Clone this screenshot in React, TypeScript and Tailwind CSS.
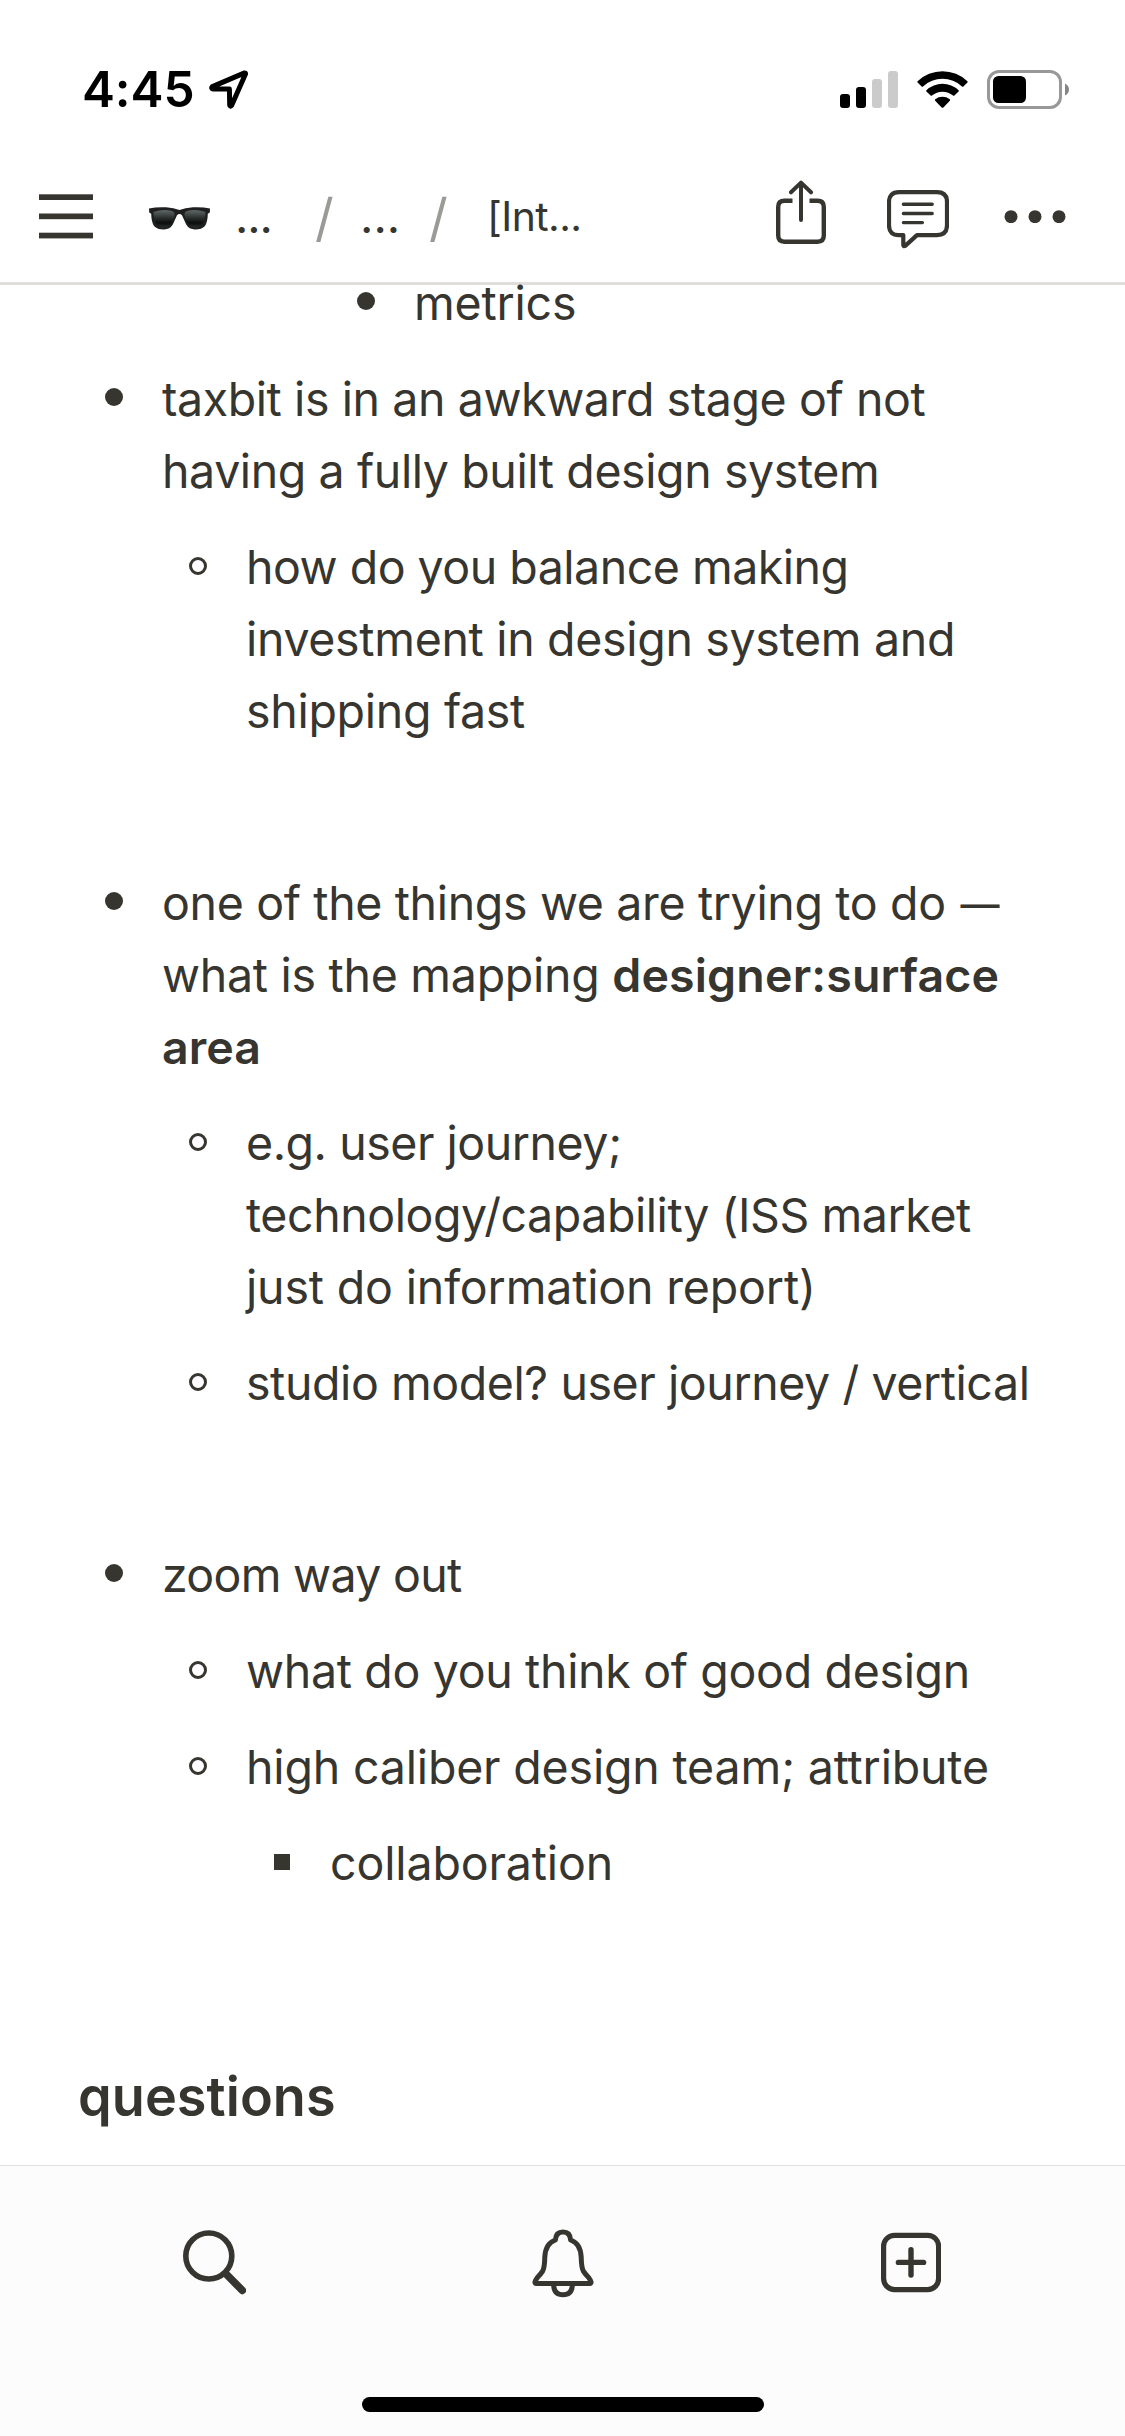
import type { ReactNode } from "react";

type Marker = "disc" | "circle" | "square";

function Bullet({ kind }: { kind: Marker }) {
  return (
    <span className="flex h-[70px] w-[24px] shrink-0 items-center justify-center">
      {kind === "disc" && <span className="mb-[2px] size-[18px] rounded-full bg-[#37352f]" />}
      {kind === "circle" && <span className="size-[18px] rounded-full border-[3px] border-[#37352f]" />}
      {kind === "square" && <span className="size-[16px] bg-[#37352f]" />}
    </span>
  );
}

function Item({ kind, indent, className = "", children }: { kind: Marker; indent: string; className?: string; children: ReactNode }) {
  return (
    <li className={`flex gap-9 ${indent} ${className}`}>
      <Bullet kind={kind} />
      <div className="flex flex-col">{children}</div>
    </li>
  );
}

function Line({ track, children }: { track: string; children: ReactNode }) {
  return <span className={`block h-[72px] whitespace-nowrap ${track}`}>{children}</span>;
}

function StatusBar() {
  return (
    <div className="flex h-[150px] items-center pt-[28px] pr-[56px] pl-[82px]">
      <span className="w-[127px] text-[49.5px] leading-[60px] font-semibold tracking-[-0.1px] text-black">4:45</span>
      <svg className="h-[39px] w-[39px]" viewBox="0 0 39 39" fill="none" stroke="#000" strokeWidth="5" strokeLinejoin="round">
        <path d="M35.6 2.9 L3.4 16.6 Q1.8 18.2 3.8 18.9 L20.4 19 L20.7 35.2 Q21.3 37 22.6 35.4 L36.6 3.8 Q36.6 2.8 35.6 2.9 Z" />
      </svg>
      <div className="ml-auto flex items-center">
        <svg className="h-[37px] w-[58px]" viewBox="0 0 58 37">
          <rect x="0" y="23" width="10" height="14" rx="3" fill="#000" />
          <rect x="16" y="16" width="10" height="21" rx="3" fill="#000" />
          <rect x="32" y="8" width="10" height="29" rx="3" fill="#cbcbcb" />
          <rect x="48" y="0" width="10" height="37" rx="3" fill="#cbcbcb" />
        </svg>
        <svg className="ml-[19px] h-[37px] w-[51px]" viewBox="0 0 51 37">
          <path d="M0.6 10.2 A36 36 0 0 1 50.4 10.2 Q51 11 50.4 11.6 L46.4 15.4 Q45.8 16 45 15.4 A29 29 0 0 0 6 15.4 Q5.2 16 4.6 15.4 L0.6 11.6 Q0 11 0.6 10.2Z" />
          <path d="M9.4 19.2 A23.5 23.5 0 0 1 41.6 19.2 Q42.2 20 41.6 20.6 L37.4 24.6 Q36.7 25 36 24.6 A16 16 0 0 0 15 24.6 Q14.3 25 13.6 24.6 L9.4 20.6 Q8.8 20 9.4 19.2Z" />
          <path d="M18.2 28.2 A12 12 0 0 1 32.8 28.2 Q33.4 29 32.8 29.8 L26.4 36.4 Q25.5 37.2 24.6 36.4 L18.2 29.8 Q17.6 29 18.2 28.2Z" />
        </svg>
        <svg className="ml-[19px] h-[39px] w-[82px]" viewBox="0 0 82 39">
          <rect x="1.5" y="1.5" width="72" height="36" rx="10.5" fill="none" stroke="#989898" strokeWidth="3" />
          <rect x="6" y="6" width="33" height="27" rx="5.5" fill="#000" />
          <path d="M78 13.5 Q82 15.5 82 19.5 Q82 23.5 78 25.5Z" fill="#858585" />
        </svg>
      </div>
    </div>
  );
}

function Sunglasses() {
  return (
    <svg className="mt-[5px] ml-[56px] h-[23px] w-[61px]" viewBox="0 0 61 23">
      <defs>
        <linearGradient id="lens" x1="0" y1="0" x2="0" y2="1">
          <stop offset="0" stopColor="#5f6867" />
          <stop offset="0.5" stopColor="#232827" />
          <stop offset="0.72" stopColor="#0b0d0c" />
          <stop offset="1" stopColor="#2b302f" />
        </linearGradient>
      </defs>
      <path d="M0 1.4 Q8 -0.2 17 0.3 Q25 0.8 30.5 3 Q36 0.8 44 0.3 Q53 -0.2 61 1.4 L60.8 5.6 L58.8 6.8 Q58.6 15 56 19 Q52.5 22.6 46 22.5 Q40 22.3 37.2 17.5 L33 8.2 Q30.5 6 28 8.2 L23.8 17.5 Q21 22.3 15 22.5 Q8.5 22.6 5 19 Q2.4 15 2.2 6.8 L0.2 5.6Z" fill="#1f1f1f" />
      <path d="M4.4 5 Q12 2.4 21 3.4 Q26.6 4.4 25.4 8.4 Q23 20.6 14.6 20.8 Q5.4 20.6 4.4 5Z" fill="url(#lens)" />
      <path d="M56.6 5 Q49 2.4 40 3.4 Q34.4 4.4 35.6 8.4 Q38 20.6 46.4 20.8 Q55.6 20.6 56.6 5Z" fill="url(#lens)" />
    </svg>
  );
}

function TopNav() {
  return (
    <nav className="flex h-[132px] items-center pl-[39px]">
      <svg className="h-[45px] w-[54px]" viewBox="0 0 54 45" fill="#37352f">
        <rect y="0.3" width="54" height="5.7" />
        <rect y="19.5" width="54" height="5.7" />
        <rect y="38.7" width="54" height="5.7" />
      </svg>
      <Sunglasses />
      <span className="ml-[25px] w-[80px] text-[46.5px] leading-[60px] tracking-[-1.2px]">...</span>
      <span className="w-[45px] pt-1 text-[52px] leading-[60px] text-[#9b9a97]">/</span>
      <span className="w-[69px] text-[46.5px] leading-[60px]">...</span>
      <span className="w-[58px] pt-1 text-[52px] leading-[60px] text-[#9b9a97]">/</span>
      <span className="w-[289px] text-[40.8px] leading-[60px] tracking-[-0.58px]">[Int...</span>
      <svg className="h-[72px] w-[50px]" viewBox="0 0 50 72" fill="none" stroke="#37352f" strokeWidth="4.4" strokeLinecap="round" strokeLinejoin="round">
        <path d="M16.5 20.8 H8.5 Q2.2 20.8 2.2 27 V55.5 Q2.2 61.7 8.5 61.7 H41.5 Q47.8 61.7 47.8 55.5 V27 Q47.8 20.8 41.5 20.8 H33.5" strokeLinecap="butt" />
        <path d="M25 40 V3 M15 12.3 L25 2.6 L35 12.3" strokeWidth="4" />
      </svg>
      <svg className="ml-[61px] h-[72px] w-[62px]" viewBox="0 0 62 72" fill="none" stroke="#37352f" strokeWidth="4.2" strokeLinecap="round" strokeLinejoin="round">
        <path d="M12 12.2 H50 Q60 12.2 60 22 V45.3 Q60 55.1 50 55.1 H30 L18.2 65.9 Q16.3 66.6 16.3 65 V55.1 H12 Q2 55.1 2 45.3 V22 Q2 12.2 12 12.2Z" />
        <path d="M16.4 24.2 H45.2 M16.4 33.5 H45.2 M16.4 42.6 H35.4" strokeWidth="3.4" />
      </svg>
      <svg className="ml-[55px] h-[14px] w-[62px]" viewBox="0 0 62 14" fill="#37352f">
        <circle cx="7" cy="7.7" r="6.5" />
        <circle cx="31" cy="7.7" r="6.5" />
        <circle cx="55" cy="7.7" r="6.5" />
      </svg>
    </nav>
  );
}

function BottomBar() {
  return (
    <footer className="flex h-[271px] shrink-0 flex-col items-center border-t border-[#e0e0e0] bg-[#fcfcfc]">
      <div className="flex h-[193px] w-full items-center pt-px pl-[183px]">
        <svg className="h-[72px] w-[63px]" viewBox="0 0 63 72" fill="none" stroke="#37352f" strokeLinecap="round">
          <circle cx="25.8" cy="29" r="23" strokeWidth="5.6" />
          <path d="M43.5 47.4 L59.3 63.4" strokeWidth="7.6" />
        </svg>
        <svg className="ml-[286px] h-[72px] w-[62px]" viewBox="0 0 62 72" fill="none" stroke="#37352f" strokeWidth="5" strokeLinejoin="round">
          <path d="M23.4 13 Q23.8 5 31 5 Q38.2 5 38.6 13 Q48.5 16.4 49.2 30 Q49.4 41 51.5 44.4 Q53 46.8 56.6 50.4 Q61 56.4 57.6 56.6 H4.4 Q1 56.4 5.4 50.4 Q9 46.8 10.5 44.4 Q12.6 41 12.8 30 Q13.5 16.4 23.4 13Z" />
          <path d="M21.6 57.7 Q22 67.8 31 67.8 Q40 67.8 40.4 57.7" />
        </svg>
        <svg className="ml-[287px] h-[72px] w-[60px]" viewBox="0 0 60 72" fill="none" stroke="#37352f" strokeWidth="5.2" strokeLinecap="round">
          <rect x="2.6" y="8.3" width="55" height="54.3" rx="11" />
          <path d="M17.4 35.4 H42.6 M30 22.8 V48" strokeWidth="5.4" />
        </svg>
      </div>
      <div className="mt-[38px] h-[15px] w-[402px] rounded-full bg-black" />
    </footer>
  );
}

export default function App() {
  return (
    <div className="flex h-[2436px] w-[1125px] flex-col overflow-hidden bg-white font-['Inter',sans-serif] text-[#37352f]">
      <header className="h-[285px] shrink-0 border-b-[3px] border-[#dfdedb]">
        <StatusBar />
        <TopNav />
      </header>
      <main className="h-[1880px] shrink-0">
        <ul className="-mt-[18px] flex flex-col gap-6 text-[46.5px] leading-[72px]">
          <Item kind="disc" indent="pl-[354px]">
            <Line track="tracking-[-0.2px]">metrics</Line>
          </Item>
          <Item kind="disc" indent="pl-[102px]">
            <Line track="tracking-[-0.41px]">taxbit is in an awkward stage of not</Line>
            <Line track="tracking-[-0.4px]">having a fully built design system</Line>
          </Item>
          <Item kind="circle" indent="pl-[186px]">
            <Line track="tracking-[-0.5px]">how do you balance making</Line>
            <Line track="tracking-[-0.32px]">investment in design system and</Line>
            <Line track="tracking-[-0.3px]">shipping fast</Line>
          </Item>
          <Item kind="disc" indent="pl-[102px]" className="mt-[96px]">
            <Line track="tracking-[-0.35px]">
              one of the things we are trying to do{" "}
              <span className="inline-block pl-[2px] align-[2px] text-[39px] leading-none font-medium">—</span>
            </Line>
            <Line track="tracking-[-0.28px]">
              what is the mapping <b className="font-semibold tracking-[0.16px]">designer:surface</b>
            </Line>
            <Line track="tracking-[0.07px]">
              <b className="font-semibold">area</b>
            </Line>
          </Item>
          <Item kind="circle" indent="pl-[186px]">
            <Line track="tracking-[-0.47px]">e.g. user journey;</Line>
            <Line track="tracking-[-0.43px]">technology/capability (ISS market</Line>
            <Line track="tracking-[-0.16px]">just do information report)</Line>
          </Item>
          <Item kind="circle" indent="pl-[186px]">
            <Line track="tracking-[-0.42px]">studio model? user journey / vertical</Line>
          </Item>
          <Item kind="disc" indent="pl-[102px]" className="mt-[96px]">
            <Line track="tracking-[-0.7px]">zoom way out</Line>
          </Item>
          <Item kind="circle" indent="pl-[186px]">
            <Line track="tracking-[-0.33px]">what do you think of good design</Line>
          </Item>
          <Item kind="circle" indent="pl-[186px]">
            <Line track="tracking-[-0.18px]">high caliber design team; attribute</Line>
          </Item>
          <Item kind="square" indent="pl-[270px]">
            <Line track="tracking-[-0.14px]">collaboration</Line>
          </Item>
        </ul>
        <h3 className="mt-[163px] pl-[78px] text-[54px] leading-[70px] font-semibold tracking-[0.06px]">questions</h3>
      </main>
      <BottomBar />
    </div>
  );
}
